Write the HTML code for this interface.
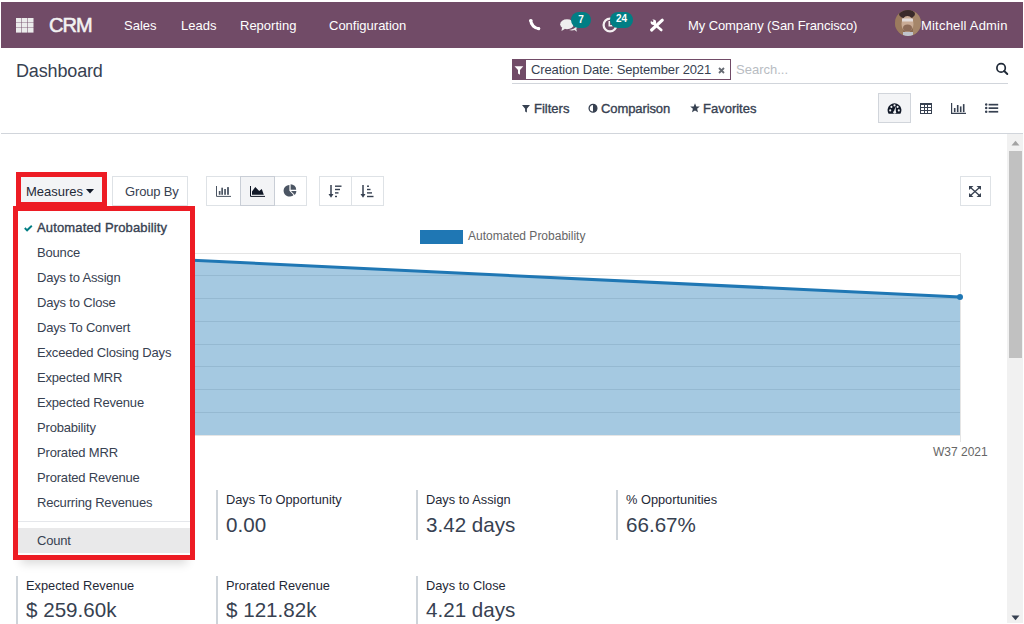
<!DOCTYPE html>
<html><head><meta charset="utf-8">
<style>
*{box-sizing:border-box;margin:0;padding:0}
html,body{width:1024px;height:624px;overflow:hidden;background:#fff}
body{font-family:"Liberation Sans",sans-serif;color:#374151;position:relative}
.a{position:absolute;white-space:nowrap}
#nav{position:absolute;left:1px;top:2px;width:1022px;height:46px;background:#714b67}
.nt{position:absolute;white-space:nowrap;color:#fff;font-size:13px;line-height:13px;top:19px}
.badge{position:absolute;background:#017e84;color:#fff;font-size:10px;font-weight:bold;border-radius:8px;text-align:center;line-height:15px;height:15.5px}
.btn{position:absolute;border:1px solid #dee2e6;background:#fff}
.mi{position:absolute;left:37px;font-size:13px;line-height:13px;color:#374151;white-space:nowrap;letter-spacing:-0.18px}
.kl{position:absolute;font-size:12.8px;line-height:12.8px;color:#1f2937;white-space:nowrap}
.kv{position:absolute;font-size:20.6px;line-height:20.6px;color:#374151;white-space:nowrap}
.kb{position:absolute;width:2px;background:#ced4da}
.t13{font-size:13px;line-height:13px}
.md{font-weight:normal;-webkit-text-stroke:0.35px currentColor}
</style></head><body>
<div id="nav"></div>
<!-- navbar -->
<svg class="a" style="left:16px;top:18px" width="18" height="15" viewBox="0 0 18 15">
 <g fill="#ececec">
 <rect x="0" y="0" width="5.5" height="4.6"/><rect x="6" y="0" width="5.5" height="4.6"/><rect x="12" y="0" width="5.5" height="4.6"/>
 <rect x="0" y="5" width="5.5" height="4.6"/><rect x="6" y="5" width="5.5" height="4.6"/><rect x="12" y="5" width="5.5" height="4.6"/>
 <rect x="0" y="10" width="5.5" height="4.6"/><rect x="6" y="10" width="5.5" height="4.6"/><rect x="12" y="10" width="5.5" height="4.6"/>
 </g></svg>
<div class="nt" style="left:49px;top:15px;font-size:20px;line-height:20px;-webkit-text-stroke:0.55px #f2f2f2;color:#f2f2f2;letter-spacing:-0.9px">CRM</div>
<div class="nt" style="left:124px">Sales</div>
<div class="nt" style="left:181px">Leads</div>
<div class="nt" style="left:240px">Reporting</div>
<div class="nt" style="left:329px">Configuration</div>

<!-- phone -->
<svg class="a" style="left:528px;top:18px" width="14" height="13" viewBox="0 0 14 13">
 <path d="M1.2 2 A10.3 10.3 0 0 0 11.5 12.2 L11.8 9.4 A7.6 7.6 0 0 1 4.2 1.6 Z" fill="#fff"/>
 <circle cx="2.7" cy="2.6" r="1.7" fill="#fff"/><circle cx="10.6" cy="10.6" r="1.7" fill="#fff"/>
</svg>
<!-- chat -->
<svg class="a" style="left:560px;top:19px" width="18" height="14" viewBox="0 0 18 14">
 <ellipse cx="7" cy="5.2" rx="6.8" ry="5" fill="#eee"/>
 <path d="M2 8.5 L1.5 12 L5.5 9.5 Z" fill="#eee"/>
 <path d="M9 11 C11 11.5 13 11.5 14.5 11 L17 12.8 L16.2 10 C17.5 9 17.8 7.5 17.2 6.3 C15.5 9.5 12 10.8 9 11 Z" fill="#eee"/>
</svg>
<div class="badge" style="left:571px;top:12px;width:20px">7</div>
<!-- clock -->
<svg class="a" style="left:602px;top:17px" width="16" height="16" viewBox="0 0 16 16">
 <circle cx="8" cy="8" r="6.4" fill="none" stroke="#f4f0f2" stroke-width="2.3"/>
 <path d="M7.3 4 V8.8 H10.5" fill="none" stroke="#f4f0f2" stroke-width="1.6"/>
</svg>
<div class="badge" style="left:610px;top:12px;width:23px;line-height:14.5px">24</div>
<!-- tools -->
<svg class="a" style="left:646px;top:14px" width="22" height="22" viewBox="0 0 22 22">
 <path d="M8.6 10.2 L15.3 16" stroke="#fff" stroke-width="2.6" stroke-linecap="round"/>
 <circle cx="7.4" cy="8.2" r="2.7" fill="#fff"/>
 <path d="M5.6 4.6 L7.3 7.6 L4 6.1 Z" fill="#714b67"/>
 <circle cx="6.3" cy="6.8" r="1.1" fill="#714b67"/>
 <path d="M5.6 16 L16.3 6.2" stroke="#fff" stroke-width="3.1" stroke-linecap="round"/>
</svg>
<div class="nt" style="left:688px;letter-spacing:-0.1px">My Company (San Francisco)</div>
<!-- avatar -->
<svg class="a" style="left:895px;top:10px" width="26" height="26" viewBox="0 0 26 26">
 <defs><clipPath id="av"><circle cx="13" cy="13" r="13"/></clipPath></defs>
 <g clip-path="url(#av)">
  <rect width="26" height="26" fill="#8a6a52"/>
  <rect x="0" y="0" width="8" height="26" fill="#9b7a5e"/>
  <rect x="18" y="0" width="8" height="26" fill="#a5866a"/>
  <ellipse cx="12" cy="4" rx="8" ry="4.5" fill="#3a2a2a"/>
  <ellipse cx="12.5" cy="14" rx="6" ry="8" fill="#c9ab95"/>
  <rect x="7" y="8.5" width="11" height="3" fill="#e8e4e6" opacity=".85"/>
  <ellipse cx="12.5" cy="18" rx="4.5" ry="3.5" fill="#8c6b58"/>
  <rect x="8" y="22" width="10" height="4" fill="#c0c4cc"/>
 </g>
</svg>
<div class="nt" style="left:921px;letter-spacing:0.2px">Mitchell Admin</div>

<!-- control panel -->
<div class="a" style="left:16px;top:62px;font-size:18px;line-height:18px;letter-spacing:-0.15px">Dashboard</div>
<!-- search -->
<div class="a" style="left:512px;top:59px;width:219px;height:21px;border:1px solid #714b67"></div>
<div class="a" style="left:512px;top:59px;width:14px;height:21px;background:#714b67"></div>
<svg class="a" style="left:514px;top:66px" width="10" height="9" viewBox="0 0 10 9"><path d="M0.5 0.3 H9.3 L6 4 V8.8 L4 7.6 V4 Z" fill="#fff"/></svg>
<div class="a t13" style="left:531px;top:63px;letter-spacing:-0.12px">Creation Date: September 2021</div>
<svg class="a" style="left:718px;top:67px" width="7" height="7" viewBox="0 0 7 7"><path d="M1 1 L6 6 M6 1 L1 6" stroke="#666b73" stroke-width="1.8"/></svg>
<div class="a t13" style="left:736px;top:63px;color:#b8bcc2">Search...</div>
<svg class="a" style="left:995px;top:62px" width="14" height="14" viewBox="0 0 14 14"><circle cx="6.1" cy="5.9" r="4.2" fill="none" stroke="#1f2937" stroke-width="1.7"/><path d="M9.2 9 L12.3 12" stroke="#1f2937" stroke-width="1.9" stroke-linecap="round"/></svg>
<div class="a" style="left:512px;top:83px;width:496px;height:1px;background:#d1d5db"></div>

<!-- filters row -->
<svg class="a" style="left:522px;top:105px" width="8" height="8" viewBox="0 0 8 8"><path d="M0 0 H8 L4.9 3.8 V7.6 L3.1 6.4 V3.8 Z" fill="#374151"/></svg>
<div class="a t13 md" style="left:534px;top:102px;letter-spacing:0px">Filters</div>
<svg class="a" style="left:588px;top:103px" width="10" height="10" viewBox="0 0 10 10"><circle cx="5" cy="5.2" r="3.9" fill="none" stroke="#374151" stroke-width="1.3"/><path d="M5 1.2 A4 4 0 0 1 5 9.2 Z" fill="#374151"/></svg>
<div class="a t13 md" style="left:601px;top:102px;letter-spacing:-0.1px">Comparison</div>
<svg class="a" style="left:690px;top:103px" width="10" height="10" viewBox="0 0 10 10"><path d="M5 0.2 L6.3 3.4 L9.8 3.6 L7.1 5.8 L8 9.3 L5 7.4 L2 9.3 L2.9 5.8 L0.2 3.6 L3.7 3.4 Z" fill="#374151"/></svg>
<div class="a t13 md" style="left:703px;top:102px;letter-spacing:0px">Favorites</div>

<!-- view switcher -->
<div class="a" style="left:878px;top:93px;width:33px;height:30px;background:#f3f4f6;border:1px solid #d1d5db"></div>
<svg class="a" style="left:887px;top:103px" width="15" height="11" viewBox="0 0 15 11">
 <path d="M1.6 10.8 A6.9 6.9 0 1 1 13.4 10.8 Z" fill="#111827"/>
 <circle cx="3.2" cy="7.4" r="1.05" fill="#f3f4f6"/><circle cx="4.4" cy="3.9" r="1.05" fill="#f3f4f6"/><circle cx="10.6" cy="3.9" r="1.05" fill="#f3f4f6"/><circle cx="11.8" cy="7.4" r="1.05" fill="#f3f4f6"/><circle cx="7.5" cy="2.4" r="1.05" fill="#f3f4f6"/>
 <path d="M6.6 9.2 L8.6 3.6 L8.9 9.6 Z" fill="#f3f4f6"/><circle cx="7.7" cy="9.3" r="1.4" fill="#f3f4f6"/>
</svg>
<svg class="a" style="left:920px;top:103px" width="12" height="11" viewBox="0 0 12 11" shape-rendering="crispEdges">
 <path d="M0 0 H12 V11 H0 Z M1 2 V4 H4 V2 Z M5 2 V4 H7 V2 Z M8 2 V4 H11 V2 Z M1 5 V7 H4 V5 Z M5 5 V7 H7 V5 Z M8 5 V7 H11 V5 Z M1 8 V10 H4 V8 Z M5 8 V10 H7 V8 Z M8 8 V10 H11 V8 Z" fill="#374151" fill-rule="evenodd"/>
</svg>
<svg class="a" style="left:951px;top:103px" width="16" height="11" viewBox="0 0 16 11">
 <path d="M0.6 0 V10.4 H15" fill="none" stroke="#374151" stroke-width="1.2"/>
 <rect x="2.9" y="5" width="1.6" height="4.1" fill="#374151"/><rect x="5.9" y="2" width="1.6" height="7.1" fill="#374151"/><rect x="8.9" y="3.4" width="1.6" height="5.7" fill="#374151"/><rect x="11.9" y="1.1" width="1.6" height="8" fill="#374151"/>
</svg>
<svg class="a" style="left:985px;top:103px" width="14" height="11" viewBox="0 0 14 11">
 <circle cx="1.2" cy="1.6" r="1.25" fill="#374151"/><circle cx="1.2" cy="5.1" r="1.25" fill="#374151"/><circle cx="1.2" cy="8.7" r="1.25" fill="#374151"/>
 <rect x="3.6" y="0.8" width="9.6" height="1.7" fill="#374151"/><rect x="3.6" y="4.3" width="9.6" height="1.7" fill="#374151"/><rect x="3.6" y="7.9" width="9.6" height="1.7" fill="#374151"/>
</svg>

<div class="a" style="left:1px;top:133px;width:1022px;height:1px;background:#d1d5db"></div>

<!-- scrollbar -->
<div class="a" style="left:1007px;top:134px;width:16px;height:489px;background:#f1f1f1"></div>
<div class="a" style="left:1009px;top:151px;width:13px;height:207px;background:#c1c1c1"></div>
<svg class="a" style="left:1011px;top:140px" width="9" height="6" viewBox="0 0 9 6"><path d="M0.5 5.5 L4.5 0.8 L8.5 5.5 Z" fill="#a3a3a3"/></svg>
<svg class="a" style="left:1011px;top:615px" width="9" height="6" viewBox="0 0 9 6"><path d="M0.5 0.5 L4.5 5.2 L8.5 0.5 Z" fill="#374151"/></svg>

<!-- graph toolbar -->
<div class="a" style="left:112px;top:176px;width:76px;height:30px;border:1px solid #dee2e6"></div>
<div class="a t13" style="left:125px;top:185px;letter-spacing:-0.15px">Group By</div>

<div class="a" style="left:206px;top:176px;width:101px;height:30px;border:1px solid #dee2e6"></div>
<div class="a" style="left:240px;top:176px;width:35px;height:30px;border:1px solid #c9ced6;background:#f3f4f6"></div>
<svg class="a" style="left:216px;top:186px" width="15" height="11" viewBox="0 0 15 11">
 <path d="M0.5 0 V10.4 H15" fill="none" stroke="#4b5563" stroke-width="1"/>
 <rect x="2.8" y="5" width="1.7" height="3.8" fill="#4b5563"/><rect x="5.3" y="1.7" width="1.7" height="7.1" fill="#4b5563"/><rect x="8.2" y="3" width="1.7" height="5.8" fill="#4b5563"/><rect x="11.1" y="1.1" width="1.8" height="7.7" fill="#4b5563"/>
</svg>
<svg class="a" style="left:250px;top:186px" width="15" height="11" viewBox="0 0 15 11">
 <path d="M0.5 0 V10.4 H15" fill="none" stroke="#111827" stroke-width="1"/>
 <path d="M2 8.8 V5.5 L5.3 1.1 L9.2 5 L11.8 3 L13.8 8.8 Z" fill="#111827"/>
</svg>
<svg class="a" style="left:283px;top:184px" width="15" height="14" viewBox="0 0 15 14">
 <path d="M6.4 6.8 V1 A5.8 5.8 0 1 0 10.5 10.9 Z" fill="#4b5563"/>
 <path d="M7.6 5.8 V0.2 A5.6 5.6 0 0 1 13.2 5.8 Z" fill="#4b5563"/>
 <path d="M8 7.1 H13.4 A5.5 5.5 0 0 1 11.8 10.9 Z" fill="#4b5563"/>
</svg>

<div class="a" style="left:319px;top:176px;width:65px;height:30px;border:1px solid #dee2e6"></div>
<div class="a" style="left:351px;top:176px;width:1px;height:30px;background:#dee2e6"></div>
<svg class="a" style="left:328px;top:185px" width="14" height="13" viewBox="0 0 14 13">
 <path d="M3 0 V11" stroke="#374151" stroke-width="1.5"/><path d="M0.5 9 L3 12.8 L5.5 9 Z" fill="#374151"/>
 <rect x="7" y="0.5" width="6.5" height="1.4" fill="#374151"/><rect x="7" y="3.8" width="5" height="1.4" fill="#374151"/><rect x="7" y="7.2" width="3.5" height="1.4" fill="#374151"/><rect x="7" y="10.8" width="2" height="1.4" fill="#374151"/>
</svg>
<svg class="a" style="left:360px;top:185px" width="14" height="13" viewBox="0 0 14 13">
 <path d="M3 0 V11" stroke="#374151" stroke-width="1.5"/><path d="M0.5 9 L3 12.8 L5.5 9 Z" fill="#374151"/>
 <rect x="7" y="0.5" width="2" height="1.4" fill="#374151"/><rect x="7" y="3.8" width="3.5" height="1.4" fill="#374151"/><rect x="7" y="7.2" width="5" height="1.4" fill="#374151"/><rect x="7" y="10.8" width="6.5" height="1.4" fill="#374151"/>
</svg>

<div class="a" style="left:960px;top:176px;width:31px;height:30px;border:1px solid #dee2e6"></div>
<svg class="a" style="left:969px;top:186px" width="12" height="11" viewBox="0 0 12 11">
 <path d="M1.5 1.5 L10.5 9.5 M10.5 1.5 L1.5 9.5" stroke="#374151" stroke-width="1.3"/>
 <path d="M0 0 H4.5 L0 4 Z M12 0 H7.5 L12 4 Z M0 11 H4.5 L0 7 Z M12 11 H7.5 L12 7 Z" fill="#374151"/>
</svg>

<!-- chart -->
<div class="a" style="left:420px;top:230px;width:43px;height:14px;background:#1f77b4"></div>
<div class="a" style="left:468px;top:230px;font-size:12px;line-height:12px;color:#666">Automated Probability</div>
<svg class="a" style="left:0;top:0" width="1000" height="470" viewBox="0 0 1000 470">
 <g stroke="#e5e5e5" stroke-width="1">
  <path d="M40 253.5 H960.5"/><path d="M40 275.5 H960.5"/><path d="M40 298.5 H960.5"/><path d="M40 321.5 H960.5"/><path d="M40 344.5 H960.5"/><path d="M40 366.5 H960.5"/><path d="M40 389.5 H960.5"/><path d="M40 412.5 H960.5"/><path d="M40 435.5 H960.5"/>
  <path d="M960.5 253 V442"/>
 </g>
 <path d="M40 253 L960 297 V435 H40 Z" fill="rgba(31,119,180,0.4)"/>
 <path d="M40 253 L960 297" stroke="#1f77b4" stroke-width="3" fill="none"/>
 <circle cx="960" cy="297" r="3" fill="#1f77b4"/>
</svg>
<div class="a" style="left:933px;top:446px;font-size:12px;line-height:12px;color:#666">W37 2021</div>

<!-- kpis -->
<div class="kb" style="left:16px;top:490px;height:50px"></div>
<div class="kb" style="left:216px;top:490px;height:50px"></div>
<div class="kb" style="left:416px;top:490px;height:50px"></div>
<div class="kb" style="left:616px;top:490px;height:50px"></div>
<div class="kl" style="left:226px;top:494px">Days To Opportunity</div>
<div class="kv" style="left:226px;top:514.5px">0.00</div>
<div class="kl" style="left:426px;top:494px">Days to Assign</div>
<div class="kv" style="left:426px;top:514.5px">3.42 days</div>
<div class="kl" style="left:626px;top:494px">% Opportunities</div>
<div class="kv" style="left:626px;top:514.5px">66.67%</div>

<div class="kb" style="left:16px;top:576px;height:50px"></div>
<div class="kb" style="left:216px;top:576px;height:50px"></div>
<div class="kb" style="left:416px;top:576px;height:50px"></div>
<div class="kl" style="left:26px;top:580px">Expected Revenue</div>
<div class="kv" style="left:26px;top:600.4px">$ 259.60k</div>
<div class="kl" style="left:226px;top:580px">Prorated Revenue</div>
<div class="kv" style="left:226px;top:600.4px">$ 121.82k</div>
<div class="kl" style="left:426px;top:580px">Days to Close</div>
<div class="kv" style="left:426px;top:600.4px">4.21 days</div>

<!-- measures button -->
<div class="a" style="left:16px;top:172px;width:91px;height:34px;background:#ed1c24"></div>
<div class="a" style="left:21px;top:177px;width:81px;height:25px;background:#f3f4f6"></div>
<div class="a t13" style="left:26px;top:185px;color:#1f2937">Measures</div>
<svg class="a" style="left:86px;top:189px" width="8" height="5" viewBox="0 0 8 5"><path d="M0 0 H8 L4 4.5 Z" fill="#111827"/></svg>

<!-- dropdown -->
<div class="a" style="left:20px;top:220px;width:168px;height:338px;box-shadow:0 7px 9px -1px rgba(0,0,0,0.14)"></div>
<div class="a" style="left:13px;top:206px;width:182px;height:354px;border:5px solid #ed1c24;background:#fff"></div>
<svg class="a" style="left:24px;top:225px" width="9" height="7" viewBox="0 0 9 7"><path d="M0.8 3 L3.1 5.3 L7.8 0.8" fill="none" stroke="#017e84" stroke-width="1.9"/></svg>
<div class="mi md" style="top:221px;letter-spacing:0.14px">Automated Probability</div>
<div class="mi" style="top:246px">Bounce</div>
<div class="mi" style="top:271px">Days to Assign</div>
<div class="mi" style="top:296px">Days to Close</div>
<div class="mi" style="top:321px">Days To Convert</div>
<div class="mi" style="top:346px">Exceeded Closing Days</div>
<div class="mi" style="top:371px">Expected MRR</div>
<div class="mi" style="top:396px">Expected Revenue</div>
<div class="mi" style="top:421px">Probability</div>
<div class="mi" style="top:446px">Prorated MRR</div>
<div class="mi" style="top:471px">Prorated Revenue</div>
<div class="mi" style="top:496px">Recurring Revenues</div>
<div class="a" style="left:18px;top:521px;width:172px;height:1px;background:#e5e7eb"></div>
<div class="a" style="left:18px;top:528px;width:172px;height:25px;background:#e9e9ea"></div>
<div class="mi" style="top:534px">Count</div>
</body></html>
